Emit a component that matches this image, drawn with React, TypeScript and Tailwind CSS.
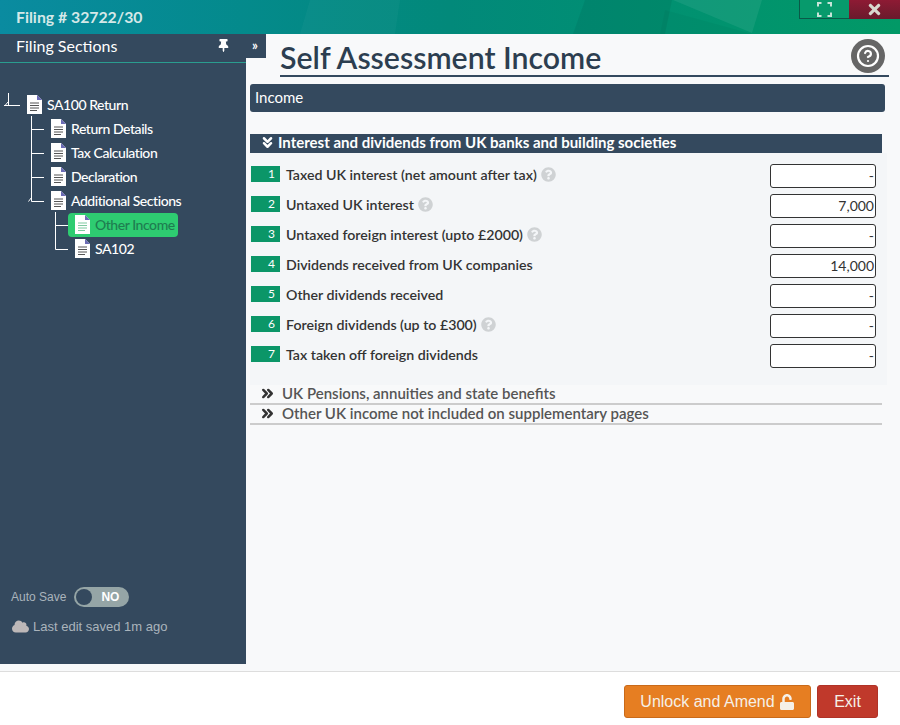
import { ChevronsDown, ChevronsRight, CircleHelp } from "lucide-react";
import { FaCloud, FaQuestionCircle, FaThumbtack, FaTimes, FaUnlock } from "react-icons/fa";

const rows = [
  { n: 1, label: "Taxed UK interest (net amount after tax)", value: "-", help: true },
  { n: 2, label: "Untaxed UK interest", value: "7,000", help: true },
  { n: 3, label: "Untaxed foreign interest (upto £2000)", value: "-", help: true },
  { n: 4, label: "Dividends received from UK companies", value: "14,000", help: false },
  { n: 5, label: "Other dividends received", value: "-", help: false },
  { n: 6, label: "Foreign dividends (up to £300)", value: "-", help: true },
  { n: 7, label: "Tax taken off foreign dividends", value: "-", help: false },
];

function DocIcon({ active }: { active?: boolean }) {
  const line = active ? "#7fc9a0" : "#555";
  return (
    <svg width="15" height="19" viewBox="0 0 15 19" className="shrink-0">
      <path d="M0 0H10L15 5V19H0Z" fill="#fff" />
      <path d="M10 0L15 5H10Z" fill="#6b6bb5" />
      <path d="M3 8H12M3 10.5H12M3 13H12M3 15.5H10" stroke={line} strokeWidth="1" />
    </svg>
  );
}

// the connector lines of one tree row
function Connector({ level, last, open }: { level: number; last?: boolean; open?: boolean }) {
  const w = level === 0 ? 27 : level === 1 ? 51 : 68;
  return (
    <svg width={w} height="24" className="shrink-0" stroke="#fff" strokeWidth="1" fill="none">
      {level === 0 && <path d="M8.5 1V13.5M4 13.5H20M5 13.5L8.5 9.5" />}
      {level === 1 && (
        <>
          <path d={last ? "M31.5 0V13.5H44" : "M31.5 0V24M31.5 13.5H44"} />
          {open && <path d="M28.5 13.5L31.5 9.5" />}
        </>
      )}
      {level === 2 && <path d={last ? "M55.5 0V13.5H68" : "M55.5 0V24M55.5 13.5H68"} />}
    </svg>
  );
}

function TreeRow({
  label,
  level,
  last,
  open,
  active,
}: {
  label: string;
  level: number;
  last?: boolean;
  open?: boolean;
  active?: boolean;
}) {
  return (
    <div className="flex h-6 items-center">
      <Connector level={level} last={last} open={open} />
      {level === 2 ? (
        <div className={`mt-[2px] flex h-6 w-[110px] items-center gap-[5px] rounded-sm pb-[2px] pl-[7px] ${active ? "bg-[#2ecc71]" : ""}`}>
          <DocIcon active={active} />
          <span className={active ? "text-[#1e7d50]" : "text-white"}>{label}</span>
        </div>
      ) : (
        <div className="flex items-center gap-[5px]">
          <DocIcon />
          <span className="text-white">{label}</span>
        </div>
      )}
    </div>
  );
}

function Sidebar() {
  return (
    <aside className="flex h-[630px] w-[246px] shrink-0 flex-col bg-[#34495e]">
      <div className="flex h-[29px] items-center justify-between border-b border-[#2a9d8f] pb-[5px] pl-4 pr-[16px] text-[16px] text-white">
        <span>Filing Sections</span>
        <FaThumbtack size={13} />
      </div>
      <div className="mt-[29px] text-[14px] font-medium tracking-[-0.45px]">
        <TreeRow label="SA100 Return" level={0} />
        <TreeRow label="Return Details" level={1} />
        <TreeRow label="Tax Calculation" level={1} />
        <TreeRow label="Declaration" level={1} />
        <TreeRow label="Additional Sections" level={1} last open />
        <TreeRow label="Other Income" level={2} active />
        <TreeRow label="SA102" level={2} last />
      </div>
      <div className="mt-auto mb-[28px] pl-[11px] font-['Liberation_Sans',sans-serif] text-[12px] text-[#aab4bc]">
        <div className="flex items-center gap-[8px]">
          <span>Auto Save</span>
          <div className="flex h-5 w-[55px] items-center rounded-full bg-[#95a5a6] pl-[2px]">
            <div className="h-4 w-4 rounded-full bg-[#34495e]" />
            <span className="ml-[9px] text-[12px] font-bold text-white">NO</span>
          </div>
        </div>
        <div className="mt-[10px] flex items-center gap-[4px] pl-px text-[13px]">
          <FaCloud size={17} className="text-[#bdb8b8]" />
          <span>Last edit saved 1m ago</span>
        </div>
      </div>
    </aside>
  );
}

function FieldRow({ n, label, value, help }: { n: number; label: string; value: string; help: boolean }) {
  return (
    <div className="flex h-[30px] items-center pl-px pr-[11px]">
      <div className="h-4 w-[29px] bg-[#0b9668] pr-[5px] text-right text-[12px] leading-4 text-white">{n}</div>
      <span className="ml-[6px] mt-[2px] text-[14.2px] font-semibold text-[#333]">{label}</span>
      {help && <FaQuestionCircle size={15} className="ml-[4px] shrink-0 text-[#cfd2d4]" />}
      <div className="mt-[4px] ml-auto h-6 w-[106px] rounded-[3px] border border-[#333] bg-white pr-px text-right text-[14px] leading-[22px] text-[#333]">
        {value}
      </div>
    </div>
  );
}

function CollapsedRow({ label }: { label: string }) {
  return (
    <div className="mr-[5px] flex h-5 items-center gap-[6px] border-b-2 border-[#ccc] pb-[2px] pl-[9px] text-[15px] font-semibold text-[#555]">
      <ChevronsRight size={17} strokeWidth={3.5} className="text-[#333]" />
      <span>{label}</span>
    </div>
  );
}

export default function App() {
  return (
    <div className="flex h-[725px] w-[900px] flex-col overflow-hidden bg-white font-['Lato',sans-serif]">
      <header className="relative flex h-[34px] shrink-0 items-center overflow-hidden bg-gradient-to-r from-[#0a8ba0] via-[#02897a] to-[#029966] pl-4 text-[15.8px] font-bold text-[#d5e8e8]">
        <svg className="absolute inset-0" width="900" height="34" fill="#fff">
          <path d="M310 0H400L395 34H300Z" fillOpacity="0.03" />
          <path d="M585 0H672L665 34H573Z" fill="#000" fillOpacity="0.06" />
          <path d="M673 0H762L752 33Z" fillOpacity="0.07" />
          <path d="M665 10L752 34H660Z" fill="#000" fillOpacity="0.03" />
        </svg>
        <span className="relative">Filing # 32722/30</span>
        <div className="relative ml-auto flex h-[19px] self-start">
          <div className="flex w-[50px] items-center justify-center border-b border-l border-[#0a5a48] bg-[#079a6c]">
            <svg width="15" height="15" viewBox="0 0 15 15" fill="none" stroke="#c6e4d8" strokeWidth="2">
              <path d="M1 4.5V1H4.5M10.5 1H14V4.5M14 10.5V14H10.5M4.5 14H1V10.5" />
            </svg>
          </div>
          <div className="flex w-[51px] items-center justify-center bg-gradient-to-b from-[#8e1a34] to-[#6a1a2c] text-[#d8d8d0]">
            <FaTimes size={17} />
          </div>
        </div>
      </header>

      <div className="relative flex shrink-0 bg-[#f8f9fa] pb-[7px]">
        <Sidebar />
        <div className="absolute top-0 left-[246px] flex h-6 w-5 items-center justify-center bg-[#34495e] pr-[2px] text-[13px] font-bold text-white">
          »
        </div>
        <main className="min-w-0 flex-1 pl-1">
          <div className="ml-[30px] mr-[11px] mt-[5px] h-[38px] border-b-2 border-[#34495e] text-[30.3px] font-semibold leading-[36px] text-[#2c3e50]">
            Self Assessment Income
          </div>
          <div className="absolute top-[5px] right-[15px] flex h-[34px] w-[34px] items-center justify-center rounded-full bg-[#666]">
            <CircleHelp size={24} strokeWidth={2.2} className="text-white" />
          </div>
          <div className="mr-[15px] mt-[7px] flex h-7 items-center rounded-[3px] bg-[#34495e] pb-[2px] pl-[5px] text-[15px] text-white">
            Income
          </div>

          <section className="mr-[13px] mt-[22px]">
            <div className="mr-[5px] flex h-[19px] items-center gap-[2px] bg-[#34495e] pb-[2px] pl-[9px] text-[15px] font-bold text-white">
              <ChevronsDown size={17} strokeWidth={3.5} />
              <span>Interest and dividends from UK banks and building societies</span>
            </div>
            <div className="h-[232px] bg-[#f4f6f8] pt-[6px]">
              {rows.map((row) => (
                <FieldRow key={row.n} {...row} />
              ))}
            </div>
            <CollapsedRow label="UK Pensions, annuities and state benefits" />
            <CollapsedRow label="Other UK income not included on supplementary pages" />
          </section>
        </main>
      </div>

      <footer className="flex flex-1 items-start justify-end gap-[6px] border-t border-[#ddd] pr-[22px] pt-[13px] font-['Liberation_Sans',sans-serif] text-[16px] text-[#f5f0e8]">
        <button className="flex h-[33px] w-[187px] items-center justify-center gap-[4px] rounded-[3px] border border-[#c96a1a] bg-[#e67e22]">
          Unlock and Amend
          <FaUnlock size={16} />
        </button>
        <button className="h-[33px] w-[61px] rounded-[3px] border border-[#b03227] bg-[#c0392b]">Exit</button>
      </footer>
    </div>
  );
}
